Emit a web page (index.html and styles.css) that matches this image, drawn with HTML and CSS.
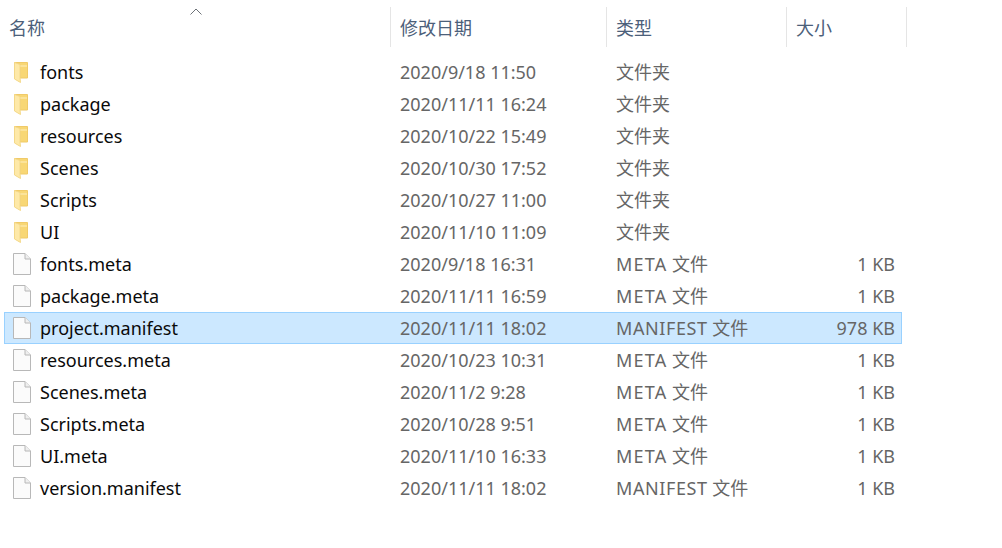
FILE: index.html
```html
<!DOCTYPE html>
<html lang="zh">
<head>
<meta charset="utf-8">
<title>文件列表</title>
<link rel="stylesheet" href="styles.css">
</head>
<body>
<svg class="defs" width="0" height="0" aria-hidden="true">
  <symbol id="folder" viewBox="0 0 18 22">
    <path d="M1.5 1.5H14.5V17H7V3.5Z" fill="#f8d775" stroke="#f0ca68" stroke-width="1"/>
    <path d="M7 4H14V6H7Z" fill="#fbe39a"/>
    <path d="M1.5 1.5L7 3.5V17L7.5 21.5L1.5 18Z" fill="#fee9a8" stroke="#f4d888" stroke-width="1"/>
  </symbol>
  <symbol id="file" viewBox="0 0 18 22">
    <path d="M.5 .5H12L17.5 6V21.5H.5Z" fill="#fbfbfb" stroke="#b8b8b8"/>
    <path d="M12 .5V6H17.5" fill="#efefef" stroke="#b8b8b8"/>
  </symbol>
</svg>
<main class="explorer">
  <header class="head">
    <span class="sort"><svg width="12" height="7" viewBox="0 0 12 7"><path d="M.5 6.5L6 1L11.5 6.5" fill="none" stroke="#6d7278"/></svg></span>
    <div class="hcell c-name">名称</div>
    <div class="hcell c-date">修改日期</div>
    <div class="hcell c-type">类型</div>
    <div class="hcell c-size">大小</div>
  </header>
  <section class="list">
    <div class="row"><div class="c-name name"><svg class="ico"><use href="#folder"/></svg>fonts</div><div class="c-date">2020/9/18 11:50</div><div class="c-type">文件夹</div><div class="c-size"></div></div>
    <div class="row"><div class="c-name name"><svg class="ico"><use href="#folder"/></svg>package</div><div class="c-date">2020/11/11 16:24</div><div class="c-type">文件夹</div><div class="c-size"></div></div>
    <div class="row"><div class="c-name name"><svg class="ico"><use href="#folder"/></svg>resources</div><div class="c-date">2020/10/22 15:49</div><div class="c-type">文件夹</div><div class="c-size"></div></div>
    <div class="row"><div class="c-name name"><svg class="ico"><use href="#folder"/></svg>Scenes</div><div class="c-date">2020/10/30 17:52</div><div class="c-type">文件夹</div><div class="c-size"></div></div>
    <div class="row"><div class="c-name name"><svg class="ico"><use href="#folder"/></svg>Scripts</div><div class="c-date">2020/10/27 11:00</div><div class="c-type">文件夹</div><div class="c-size"></div></div>
    <div class="row"><div class="c-name name"><svg class="ico"><use href="#folder"/></svg>UI</div><div class="c-date">2020/11/10 11:09</div><div class="c-type">文件夹</div><div class="c-size"></div></div>
    <div class="row"><div class="c-name name"><svg class="ico"><use href="#file"/></svg>fonts.meta</div><div class="c-date">2020/9/18 16:31</div><div class="c-type"><span class="ext-meta">META</span> 文件</div><div class="c-size">1 KB</div></div>
    <div class="row"><div class="c-name name"><svg class="ico"><use href="#file"/></svg>package.meta</div><div class="c-date">2020/11/11 16:59</div><div class="c-type"><span class="ext-meta">META</span> 文件</div><div class="c-size">1 KB</div></div>
    <div class="row selected"><div class="c-name name"><svg class="ico"><use href="#file"/></svg>project.manifest</div><div class="c-date">2020/11/11 18:02</div><div class="c-type"><span class="ext-manifest">MANIFEST</span> 文件</div><div class="c-size">978 KB</div></div>
    <div class="row"><div class="c-name name"><svg class="ico"><use href="#file"/></svg>resources.meta</div><div class="c-date">2020/10/23 10:31</div><div class="c-type"><span class="ext-meta">META</span> 文件</div><div class="c-size">1 KB</div></div>
    <div class="row"><div class="c-name name"><svg class="ico"><use href="#file"/></svg>Scenes.meta</div><div class="c-date">2020/11/2 9:28</div><div class="c-type"><span class="ext-meta">META</span> 文件</div><div class="c-size">1 KB</div></div>
    <div class="row"><div class="c-name name"><svg class="ico"><use href="#file"/></svg>Scripts.meta</div><div class="c-date">2020/10/28 9:51</div><div class="c-type"><span class="ext-meta">META</span> 文件</div><div class="c-size">1 KB</div></div>
    <div class="row"><div class="c-name name"><svg class="ico"><use href="#file"/></svg>UI.meta</div><div class="c-date">2020/11/10 16:33</div><div class="c-type"><span class="ext-meta">META</span> 文件</div><div class="c-size">1 KB</div></div>
    <div class="row"><div class="c-name name"><svg class="ico"><use href="#file"/></svg>version.manifest</div><div class="c-date">2020/11/11 18:02</div><div class="c-type"><span class="ext-manifest">MANIFEST</span> 文件</div><div class="c-size">1 KB</div></div>
  </section>
</main>
</body>
</html>
```
FILE: styles.css
```css
* { box-sizing: border-box; }
html, body { margin: 0; height: 100%; background: #fff; }
body { overflow: hidden; font-family: "Noto Sans", "Noto Sans CJK SC", sans-serif; font-size: 18px; color: #666; }
.defs { position: absolute; }
.explorer { padding-top: 7px; }
.head { position: relative; display: flex; height: 40px; color: #4c607a; }
.sort { position: absolute; left: 190px; top: 1px; line-height: 0; }
.hcell { display: flex; align-items: center; height: 40px; padding-left: 9px; padding-bottom: 1px; border-right: 1px solid #e5e5e5; }
.head .c-name { width: 391px; }
.head .c-date { width: 216px; }
.head .c-type { width: 180px; }
.head .c-size { width: 120px; }
.list { margin: 9px 0 0 4px; width: 898px; }
.row { display: flex; align-items: center; height: 32px; border: 1px solid transparent; }
.row.selected { background: #cce8ff; border-color: #99d1ff; }
.row .c-name { width: 395px; }
.row .c-date { width: 216px; }
.row .c-type { width: 180px; padding-bottom: 2px; }
.row .c-size { width: 99px; text-align: right; }
.ext-meta { letter-spacing: 1.2px; }
.ext-manifest { letter-spacing: .6px; }
.name { display: flex; align-items: center; color: #0a0a0a; padding-left: 8px; }
.ico { width: 18px; height: 22px; margin-right: 9px; flex: none; }
```
